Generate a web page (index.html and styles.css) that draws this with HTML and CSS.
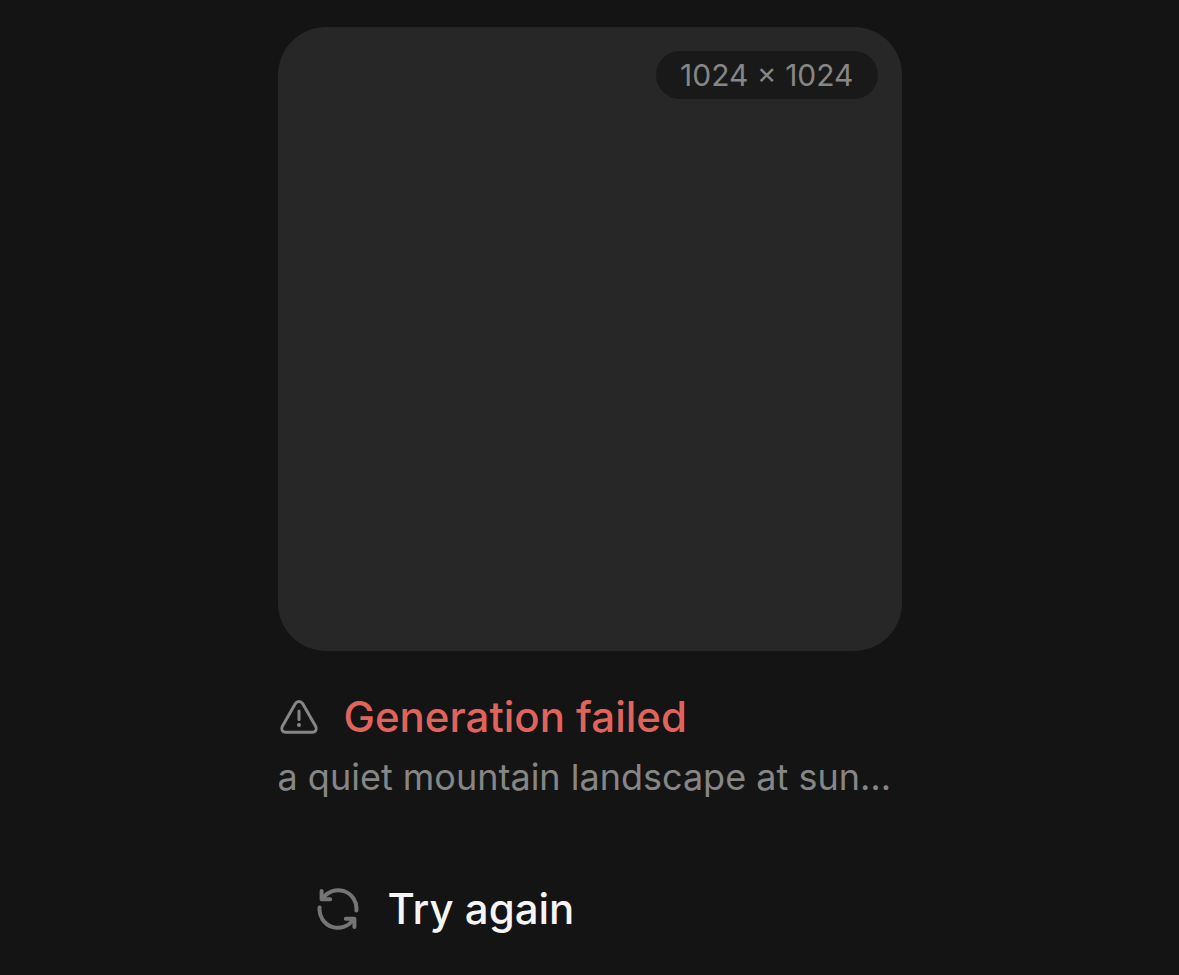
FILE: index.html
```
<!DOCTYPE html>
<html lang="en">
<head>
    <meta charset="UTF-8">
    <meta name="viewport" content="width=device-width, initial-scale=1.0">
    <title>Generation failed</title>
    <link rel="stylesheet" href="styles.css">
</head>
<body>
    <main class="generation">
        <div class="preview">
            <span class="size-badge">1024 × 1024</span>
        </div>
        <div class="status">
            <svg class="status-icon" viewBox="0 0 42 42" aria-hidden="true">
                <path d="M17.4 7.6 4.4 30.2C2.6 33.4 4.4 36.2 7.8 36.2H34.2C37.6 36.2 39.4 33.4 37.6 30.2L24.6 7.6C22.9 4.8 19.1 4.8 17.4 7.6Z"/>
                <path d="M21 15V23.5"/>
                <circle cx="21" cy="29" r="2"/>
            </svg>
            <h1 class="status-title">Generation failed</h1>
        </div>
        <p class="prompt">a quiet mountain landscape at sunrise</p>
        <button class="retry" type="button">
            <svg class="retry-icon" viewBox="0 0 44 44" aria-hidden="true">
                <path d="M40.4 23.5A18.4 18.4 0 0 0 6.4 12"/>
                <path d="M5.6 4V12.2H14.2"/>
                <path d="M3.6 20.5A18.4 18.4 0 0 0 37.6 32"/>
                <path d="M38.4 40V31.8H29.8"/>
            </svg>
            Try again
        </button>
    </main>
</body>
</html>
```
FILE: styles.css
```
* {
    box-sizing: border-box;
}

body {
    margin: 0;
    min-height: 100vh;
    background-color: #141414;
    font-family: Inter, "Liberation Sans", sans-serif;
}

.generation {
    width: 100%;
    max-width: 624px;
    margin: 0 auto;
    padding-top: 27px;
}

.preview {
    display: flex;
    justify-content: flex-end;
    align-items: flex-start;
    aspect-ratio: 1;
    padding: 24px;
    border-radius: 48px;
    background-color: #272727;
}

.size-badge {
    padding: 0 24px;
    border-radius: 24px;
    background-color: #191919;
    color: #868686;
    font-size: 30px;
    line-height: 48px;
}

.status {
    display: flex;
    align-items: center;
    gap: 24px;
    margin-top: 36px;
}

.status-icon {
    width: 42px;
    height: 42px;
    fill: none;
    stroke: #868686;
    stroke-width: 3;
    stroke-linecap: round;
    stroke-linejoin: round;
}

.status-icon circle {
    fill: #868686;
    stroke: none;
}

.status-title {
    margin: 0;
    color: #e0645c;
    font-size: 42px;
    font-weight: 500;
    line-height: 60px;
}

.prompt {
    margin: 6px 0 0;
    overflow: hidden;
    color: #868686;
    font-size: 36px;
    line-height: 48px;
    text-overflow: ellipsis;
    white-space: nowrap;
}

.retry {
    display: flex;
    align-items: center;
    gap: 28px;
    margin-top: 60px;
    padding: 18px 38px;
    border: none;
    background: none;
    color: #f5f5f5;
    font-family: inherit;
    font-size: 42px;
    font-weight: 500;
    line-height: 60px;
    cursor: pointer;
}

.retry-icon {
    width: 44px;
    height: 44px;
    fill: none;
    stroke: #757575;
    stroke-width: 4;
    stroke-linecap: round;
    stroke-linejoin: round;
}
```
